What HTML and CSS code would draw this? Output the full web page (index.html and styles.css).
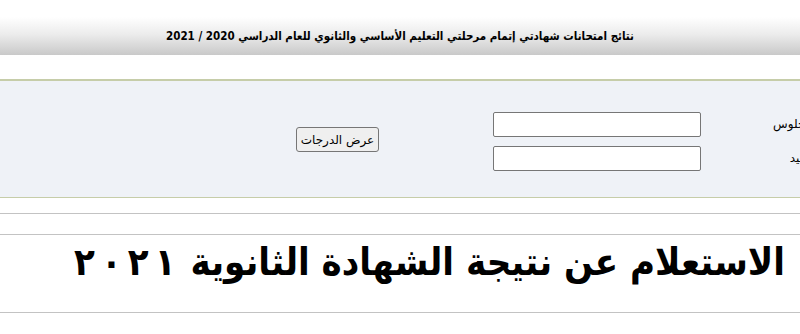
FILE: index.html
```html
<!DOCTYPE html>
<html lang="ar" dir="rtl">
<head>
<meta charset="utf-8">
<title>نتائج امتحانات</title>
<link rel="stylesheet" href="styles.css">
</head>
<body>
<div class="page">
  <header class="top">
    <h1 class="top-title">نتائج امتحانات شهادتي إتمام مرحلتي التعليم الأساسي والثانوي للعام الدراسي 2020 / 2021</h1>
  </header>
  <section class="panel">
    <div class="form-grid">
      <label class="label l1">رقم الجلوس</label>
      <input class="field f1" type="text">
      <label class="label l2">رقم القيد</label>
      <input class="field f2" type="text">
      <button class="btn" type="button">عرض الدرجات</button>
    </div>
  </section>
  <div class="rule rule-a"></div>
  <div class="rule rule-b"></div>
  <div class="headline">الاستعلام عن نتيجة الشهادة الثانوية <span class="year"><span class="d">٢</span><span class="d">٠</span><span class="d">٢</span><span class="d">١</span></span></div>
  <div class="rule rule-c"></div>
</div>
</body>
</html>
```
FILE: styles.css
```css
html, body {
  margin: 0;
  padding: 0;
  background: #ffffff;
  overflow: hidden;
}
.page {
  width: 800px;
  height: 334px;
  overflow: hidden;
  font-family: "DejaVu Sans", "Noto Sans", sans-serif;
  color: #000;
}
.top {
  margin-top: 17px;
  height: 38px;
  background: linear-gradient(to bottom, #ffffff 0%, #ececec 45%, #c9c9c9 100%);
  display: flex;
  align-items: center;
  justify-content: center;
}
.top-title {
  margin: 0;
  font-family: "DejaVu Sans Condensed", "DejaVu Sans", sans-serif;
  font-size: 11.5px;
  font-weight: bold;
  white-space: nowrap;
}
.panel {
  margin-top: 24px;
  height: 119px;
  box-sizing: border-box;
  background: #eff2f7;
  border-top: 2px solid #c6cda9;
  border-bottom: 1px solid #c6cda9;
  padding-top: 31px;
}
.form-grid {
  display: grid;
  grid-template-columns: 100px 208px 83px;
  grid-template-rows: 25px 25px;
  column-gap: 35px;
  row-gap: 9px;
  margin-right: -36px;
}
.form-grid .btn {
  grid-column: 3;
  grid-row: 1 / span 2;
  align-self: center;
  margin-right: 79px;
  margin-bottom: 4px;
}
.l1 { grid-column: 1; grid-row: 1; }
.f1 { grid-column: 2; grid-row: 1; }
.l2 { grid-column: 1; grid-row: 2; }
.f2 { grid-column: 2; grid-row: 2; }
.label {
  font-size: 12px;
  line-height: 25px;
  white-space: nowrap;
  text-align: right;
}
.field {
  width: 208px;
  height: 25px;
  box-sizing: border-box;
  border: 1px solid #767676;
  border-radius: 2px;
  background: #fff;
  margin: 0;
  padding: 0;
}
.btn {
  width: 83px;
  height: 25px;
  box-sizing: border-box;
  font-family: "DejaVu Sans", sans-serif;
  font-size: 12px;
  background: #efefef;
  border: 1px solid #767676;
  border-radius: 3px;
  padding: 0;
  color: #000;
}
.rule {
  border-top: 1px solid #c3c3c3;
}
.rule-a {
  margin-top: 15px;
}
.rule-b {
  margin-top: 20px;
}
.headline {
  height: 77px;
  box-sizing: border-box;
  padding-right: 15px;
  font-family: "DejaVu Sans Condensed", "DejaVu Sans", sans-serif;
  font-size: 38px;
  font-weight: bold;
  line-height: 54px;
  white-space: nowrap;
  text-align: right;
}
.d {
  padding: 0 3px;
}
```
